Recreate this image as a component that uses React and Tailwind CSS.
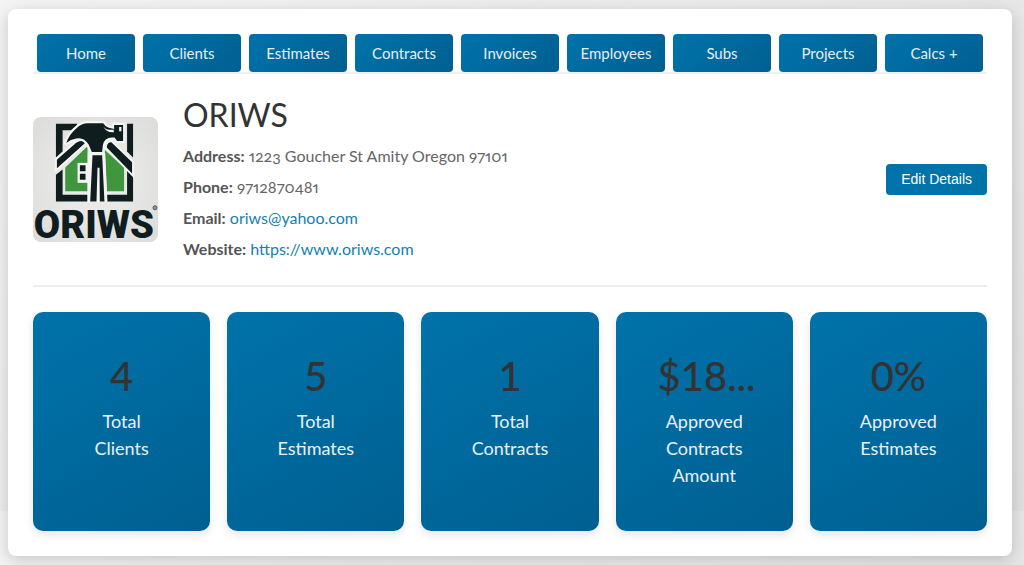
const navItems = ['Home', 'Clients', 'Estimates', 'Contracts', 'Invoices', 'Employees', 'Subs', 'Projects', 'Calcs +'];

const stats = [
  { value: '4', label: 'Total Clients' },
  { value: '5', label: 'Total Estimates' },
  { value: '1', label: 'Total Contracts' },
  { value: '$18...', label: 'Approved Contracts Amount' },
  { value: '0%', label: 'Approved Estimates' },
];

const Logo = () => (
  <svg viewBox="38 37 376 376" className="w-[125px] h-[125px] shrink-0 overflow-visible" role="img" aria-label="ORIWS logo">
    <defs>
      <radialGradient id="logoBg" r="0.75">
        <stop offset="0" stopColor="#f0f0ef" />
        <stop offset="1" stopColor="#dadad9" />
      </radialGradient>
    </defs>
    <rect x="38" y="37" width="376" height="376" rx="24" fill="url(#logoBg)" />
    {/* frame */}
    <path d="M107 57H172L158 77H127V141L107 159Z" fill="#0f1d1f" />
    <path d="M321 57H339V159L321 141Z" fill="#0f1d1f" />
    <path d="M107 211L127 195V271H202V291H107Z" fill="#0f1d1f" />
    <path d="M339 211L321 195V271H258V291H339Z" fill="#0f1d1f" />
    {/* house */}
    <path d="M135 189L202 125V260H135Z" fill="#3f963f" />
    <path d="M254 136L312 189V260H260Z" fill="#3f963f" />
    <path d="M172 175H204V235H172Z" fill="#f4f5f2" />
    <path d="M179 182H196V200H179ZM179 208H196V226H179Z" fill="#0f1d1f" />
    {/* roof */}
    <path d="M107 164L166 112Q182 103 198 107L196 118L107 198Z" fill="#0f1d1f" stroke="#f4f5f2" strokeWidth="6" />
    <path d="M339 214L257 130Q258 108 275 110L339 172Z" fill="#0f1d1f" stroke="#f4f5f2" strokeWidth="6" />
    {/* hammer */}
    <path
      d="M138 115Q148 88 169 71Q185 55 205 56H249Q254 65 266 69L282 73V61H309V109H291L283 99Q253 95 248 122L246 142H215L205 119Q190 96 168 102Q151 105 138 115Z"
      fill="#0f1d1f"
      stroke="#f4f5f2"
      strokeWidth="14"
      strokeLinejoin="round"
      paintOrder="stroke"
    />
    <path d="M249 64Q255 75 267 75H281V83Q258 85 249 64Z" fill="#f4f5f2" />
    <path d="M297 67H304V80H297Z" fill="#f4f5f2" />
    <path d="M203 145H255L262 293H202Z" fill="#f4f5f2" />
    <path d="M217 152H246L253 291H239L238 190H232L229 291H210Z" fill="#0f1d1f" />
    <text x="221" y="400" textAnchor="middle" fontFamily="Roboto, sans-serif" fontWeight="900" fontSize="115" fill="#0f1d1f">
      ORIWS
    </text>
    <circle cx="405" cy="310" r="6" fill="#8b929b" stroke="#4a5668" strokeWidth="3" />
  </svg>
);

const Detail = ({ label, children }) => (
  <p className="leading-6">
    <strong className="font-bold text-[#555]">{label}:</strong> {children}
  </p>
);

const App = () => {
  return (
    <div className="min-h-screen pt-[9px] pb-[9px] pl-2 pr-3 font-['Lato',sans-serif] bg-[linear-gradient(135deg,#f4f4f4,#e0e0e0)] bg-[length:100%_511px] bg-repeat-y">
      <div className="bg-white rounded-lg p-[25px] shadow-[0_4px_16px_rgba(0,0,0,0.18)]">
        <nav className="flex gap-2 px-1 border-b-2 border-[#f0f0f0]">
          {navItems.map((item) => (
            <a
              key={item}
              href="#"
              className="flex-1 flex items-center justify-center h-[38px] rounded-[4px] text-[15px] text-[#e3eef5] bg-[linear-gradient(135deg,#0073aa,#005f91)]"
            >
              {item}
            </a>
          ))}
        </nav>

        <section className="flex items-center gap-[25px] pt-[23px] pb-6 border-b-2 border-[#eee]">
          <Logo />
          <div className="flex-1 flex flex-col gap-[7px] text-base text-[#666] oldstyle-nums proportional-nums">
            <h1 className="mb-1 text-[32px] leading-9 font-normal text-[#333]">ORIWS</h1>
            <Detail label="Address">1223 Goucher St Amity Oregon 97101</Detail>
            <Detail label="Phone">9712870481</Detail>
            <Detail label="Email">
              <a href="mailto:oriws@yahoo.com" className="text-[#1580b5]">oriws@yahoo.com</a>
            </Detail>
            <Detail label="Website">
              <a href="https://www.oriws.com" className="text-[#1580b5]">https://www.oriws.com</a>
            </Detail>
          </div>
          <button className="h-[31px] px-[15px] rounded-[4px] bg-[#0073aa] text-white text-sm font-['Liberation_Sans',sans-serif]">
            Edit Details
          </button>
        </section>

        <section className="grid grid-cols-5 gap-[17px] pt-[25px]">
          {stats.map((stat) => (
            <div
              key={stat.label}
              className="px-[42px] pt-10 pb-[42px] text-center rounded-[10px] bg-[linear-gradient(150deg,#0073aa,#005f91)] shadow-[0_4px_8px_rgba(0,0,0,0.1)]"
            >
              <h2 className="mb-2 text-[40px] leading-12 font-medium text-[#333] whitespace-nowrap">{stat.value}</h2>
              <p className="text-lg leading-[27px] text-[#e8f1f7]">{stat.label}</p>
            </div>
          ))}
        </section>
      </div>
    </div>
  );
};

export default App;
